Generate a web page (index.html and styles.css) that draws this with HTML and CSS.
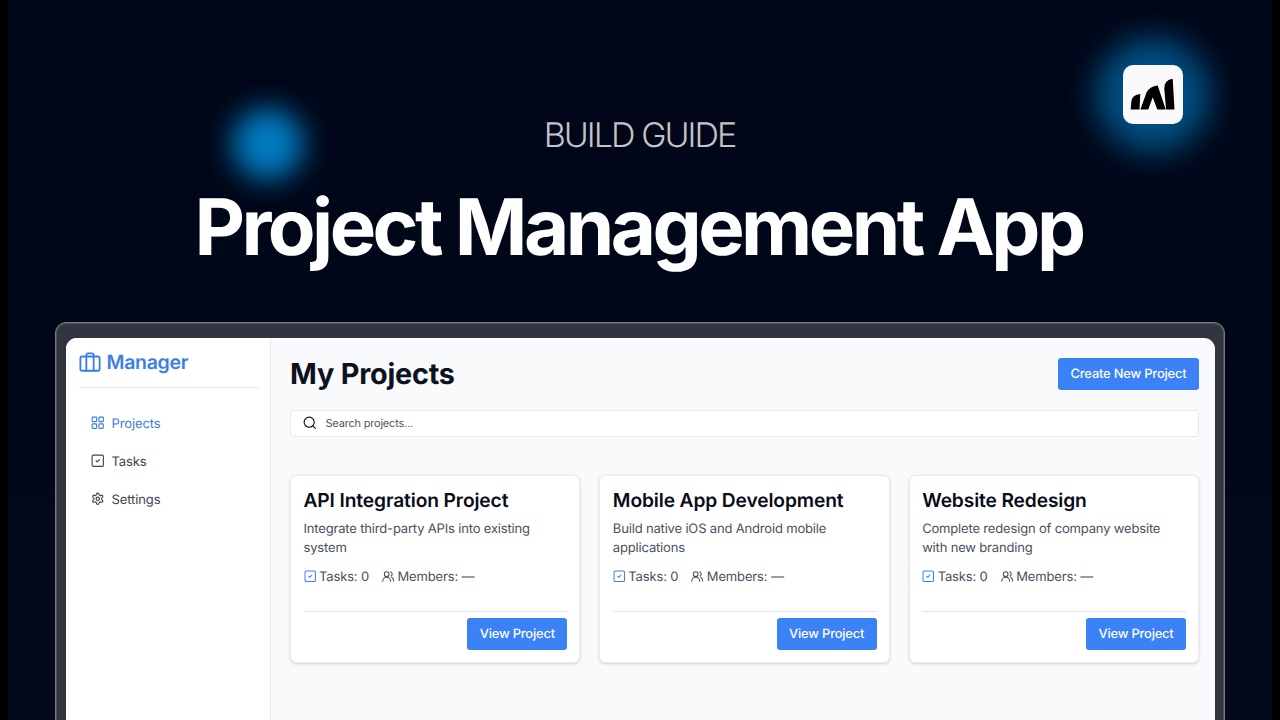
FILE: index.html
```html
<!DOCTYPE html>
<html lang="en">
<head>
	<meta charset="utf-8">
	<title>Project Management App</title>
	<link rel="stylesheet" href="styles.css">
</head>
<body>
	<!-- shared icons -->
	<svg class="sprite" aria-hidden="true">
		<symbol id="i-case" viewBox="0 0 24 24"><rect x="1.5" y="6" width="21" height="15.5" rx="2"/><path d="M8 21.5V4.500a2 2 0 0 1 2-2h4a2 2 0 0 1 2 2v17"/></symbol>
		<symbol id="i-grid" viewBox="0 0 24 24"><rect x="2" y="2" width="8" height="8" rx="1.500"/><rect x="14" y="2" width="8" height="8" rx="1.500"/><rect x="2" y="14" width="8" height="8" rx="1.500"/><rect x="14" y="14" width="8" height="8" rx="1.500"/></symbol>
		<symbol id="i-check" viewBox="0 0 24 24"><rect x="2" y="2" width="20" height="20" rx="2"/><path d="m9 12 2 2 4-4"/></symbol>
		<symbol id="i-gear" viewBox="0 0 24 24"><path d="M12.220 2h-.440a2 2 0 0 0-2 2v.180a2 2 0 0 1-1 1.730l-.430.250a2 2 0 0 1-2 0l-.150-.080a2 2 0 0 0-2.730.730l-.220.380a2 2 0 0 0 .730 2.730l.150.100a2 2 0 0 1 1 1.720v.510a2 2 0 0 1-1 1.740l-.150.090a2 2 0 0 0-.730 2.730l.220.380a2 2 0 0 0 2.730.730l.150-.080a2 2 0 0 1 2 0l.430.250a2 2 0 0 1 1 1.730V20a2 2 0 0 0 2 2h.440a2 2 0 0 0 2-2v-.180a2 2 0 0 1 1-1.730l.430-.250a2 2 0 0 1 2 0l.150.080a2 2 0 0 0 2.730-.730l.220-.390a2 2 0 0 0-.730-2.730l-.150-.080a2 2 0 0 1-1-1.740v-.500a2 2 0 0 1 1-1.740l.150-.090a2 2 0 0 0 .730-2.730l-.220-.380a2 2 0 0 0-2.730-.730l-.150.080a2 2 0 0 1-2 0l-.430-.250a2 2 0 0 1-1-1.730V4a2 2 0 0 0-2-2z"/><circle cx="12" cy="12" r="3"/></symbol>
		<symbol id="i-search" viewBox="0 0 24 24"><circle cx="11" cy="11" r="9"/><path d="m22 22-4.500-4.500"/></symbol>
		<symbol id="i-users" viewBox="0 0 24 24"><path d="M16.500 21.500a7.500 7.500 0 0 0-15 0"/><circle cx="9" cy="8" r="4.500"/><path d="M22.500 21.500c0-3.500-1.500-6-4-7.500M16.500 3.500a4.500 4.500 0 0 1 1 8"/></symbol>
	</svg>

	<div class="stage">
		<div class="glow glow-left"></div>
		<div class="glow glow-right"></div>
		<div class="logo">
			<svg viewBox="0 0 59.500 59.500"><path d="M7.700 44.500L8.300 37Q9 29.700 17.300 29L16.500 44.500ZM17.400 44.500L23.500 27.500Q26.500 21.500 34.700 20.500L42.700 44.500H34.300L29.700 32.200L25.300 44.500ZM43.100 44.500L41.300 24Q41 15 49.700 13.800L51.500 44.500Z"/></svg>
		</div>

		<header class="hero">
			<p class="kicker">BUILD GUIDE</p>
			<h1 class="title">Project Management App</h1>
		</header>

		<div class="frame">
			<div class="app">
				<aside class="sidebar">
					<div class="brand">
						<svg class="icon"><use href="#i-case"/></svg>
						<span>Manager</span>
					</div>
					<nav class="menu">
						<a class="menu-item active"><svg class="icon"><use href="#i-grid"/></svg><span>Projects</span></a>
						<a class="menu-item"><svg class="icon"><use href="#i-check"/></svg><span>Tasks</span></a>
						<a class="menu-item"><svg class="icon"><use href="#i-gear"/></svg><span>Settings</span></a>
					</nav>
				</aside>

				<main class="content">
					<div class="top">
						<h2 class="heading">My Projects</h2>
						<button class="btn create">Create New Project</button>
					</div>
					<div class="search">
						<svg class="icon"><use href="#i-search"/></svg>
						<span>Search projects...</span>
					</div>

					<div class="cards">
						<section class="card">
							<h3 class="card-title">API Integration Project</h3>
							<p class="card-text">Integrate third-party APIs into existing system</p>
							<div class="meta">
								<svg class="icon blue"><use href="#i-check"/></svg><span class="tasks">Tasks: 0</span>
								<svg class="icon"><use href="#i-users"/></svg><span>Members: —</span>
							</div>
							<div class="card-foot"><button class="btn view">View Project</button></div>
						</section>

						<section class="card">
							<h3 class="card-title">Mobile App Development</h3>
							<p class="card-text">Build native iOS and Android mobile applications</p>
							<div class="meta">
								<svg class="icon blue"><use href="#i-check"/></svg><span class="tasks">Tasks: 0</span>
								<svg class="icon"><use href="#i-users"/></svg><span>Members: —</span>
							</div>
							<div class="card-foot"><button class="btn view">View Project</button></div>
						</section>

						<section class="card">
							<h3 class="card-title">Website Redesign</h3>
							<p class="card-text">Complete redesign of company website with new branding</p>
							<div class="meta">
								<svg class="icon blue"><use href="#i-check"/></svg><span class="tasks">Tasks: 0</span>
								<svg class="icon"><use href="#i-users"/></svg><span>Members: —</span>
							</div>
							<div class="card-foot"><button class="btn view">View Project</button></div>
						</section>
					</div>
				</main>
			</div>
		</div>
	</div>
</body>
</html>
```
FILE: styles.css
```css
* {
	box-sizing: border-box;
	margin: 0;
	padding: 0;
}
body {
	background: #000;
	font-family: Inter, sans-serif;
	height: 720px;
	overflow: hidden;
	text-rendering: geometricPrecision;
}
.sprite {
	display: none;
}
.stage {
	position: relative;
	width: 1264px;
	height: 720px;
	margin: 0 auto;
	overflow: hidden;
	background: linear-gradient(#000618, #000719 40%, #020a1c);
}

/* background lights and logo */
.glow {
	position: absolute;
	border-radius: 50%;
}
.glow-left {
	left: 224px;
	top: 108px;
	width: 72px;
	height: 72px;
	background: #007abf;
	filter: blur(14px);
}
.glow-right {
	left: 1088px;
	top: 38px;
	width: 114px;
	height: 114px;
	background: #005286;
	filter: blur(16px);
}
.logo {
	position: absolute;
	left: 1115px;
	top: 64.500px;
	width: 59.500px;
	height: 59.500px;
	border-radius: 10px;
	background: #fafafa;
}
.logo svg {
	display: block;
	width: 100%;
	height: 100%;
}

.hero {
	position: relative;
	height: 322px;
	padding-top: 113px;
	padding-right: 3px;
	text-align: center;
	color: #fff;
}
.kicker {
	padding-left: 2px;
	font-size: 34px;
	font-weight: 300;
	line-height: 45px;
	letter-spacing: -1.950px;
	color: #c4c4c7;
}
.title {
	margin-top: 19px;
	font-size: 78px;
	font-weight: 700;
	line-height: 100px;
	letter-spacing: -3.550px;
	white-space: nowrap;
}

/* app window */
.frame {
	width: 1170px;
	height: 420px;
	margin: 0 auto;
	padding: 15px 9.500px 0;
	border: 1px solid #777a83;
	border-radius: 11px;
	background: #32353f;
	box-shadow: inset 0 0 0 1px #50535d;
}
.app {
	display: flex;
	height: 420px;
	border-radius: 11px 11px 0 0;
	overflow: hidden;
	background: #f9fafc;
}
.icon {
	flex: none;
	width: 13.500px;
	height: 13.500px;
	fill: none;
	stroke: currentColor;
	stroke-width: 2;
	stroke-linecap: round;
	stroke-linejoin: round;
}
.sidebar {
	width: 205px;
	padding: 0 12px 0 13px;
	background: #fff;
	border-right: 1px solid #e8eaee;
}
.brand {
	display: flex;
	align-items: center;
	gap: 6px;
	height: 50px;
	padding-bottom: 2px;
	border-bottom: 1px solid #e6e8ec;
	font-size: 19.500px;
	font-weight: 600;
	letter-spacing: -0.300px;
	color: #3b7ee8;
}
.brand .icon {
	width: 22px;
	height: 22px;
}
.menu {
	padding: 16px 12.500px;
}
.menu-item {
	display: flex;
	align-items: center;
	gap: 7px;
	height: 38px;
	font-size: 13px;
	letter-spacing: -0.100px;
	color: #3d4451;
}
.menu-item span {
	padding-top: 1px;
}
.menu-item.active {
	color: #3c7ce0;
}

.content {
	flex: 1;
	padding: 20px 15.500px 0 19.500px;
}
.top {
	display: flex;
	justify-content: space-between;
	height: 52px;
}
.heading {
	font-size: 28.800px;
	font-weight: 700;
	line-height: 32px;
	letter-spacing: -0.200px;
	color: #0c1220;
}
.btn {
	height: 32px;
	border: 0;
	border-radius: 3px;
	background: #3b82f6;
	color: #fff;
	font-family: inherit;
	font-size: 12.900px;
	font-weight: 500;
	letter-spacing: -0.180px;
	text-rendering: inherit;
}
.create {
	width: 141px;
}
.view {
	width: 100px;
}
.search {
	display: flex;
	align-items: center;
	gap: 9px;
	height: 27px;
	padding: 0 12px 1px;
	border: 1px solid #e6e8eb;
	border-radius: 3px;
	background: #fff;
	font-size: 11px;
	letter-spacing: -0.200px;
	color: #50545c;
}
.search .icon {
	color: #111;
}
.cards {
	display: grid;
	grid-template-columns: repeat(3, 1fr);
	gap: 19px;
	margin-top: 38px;
}
.card {
	height: 188px;
	padding: 12px 12px 13px 12.500px;
	border: 1px solid #eaecef;
	border-radius: 6px;
	background: #fff;
	box-shadow: 0 1px 3px rgba(0, 0, 0, 0.16);
}
.card-title {
	font-size: 19.200px;
	font-weight: 600;
	line-height: 24px;
	letter-spacing: -0.120px;
	color: #080c18;
}
.card-text {
	margin-top: 8px;
	font-size: 13px;
	line-height: 19px;
	letter-spacing: -0.170px;
	color: #475160;
}
.meta {
	display: flex;
	align-items: center;
	gap: 3px;
	height: 19px;
	margin-top: 9px;
	font-size: 13px;
	letter-spacing: -0.150px;
	color: #475160;
}
.meta .icon {
	width: 12.500px;
	height: 12.500px;
}
.meta .blue {
	color: #3b82f6;
}
.tasks {
	margin-right: 10px;
}
.card-foot {
	display: flex;
	justify-content: flex-end;
	margin-top: 25px;
	padding-top: 6px;
	border-top: 1px solid #e1e5e9;
}
```
